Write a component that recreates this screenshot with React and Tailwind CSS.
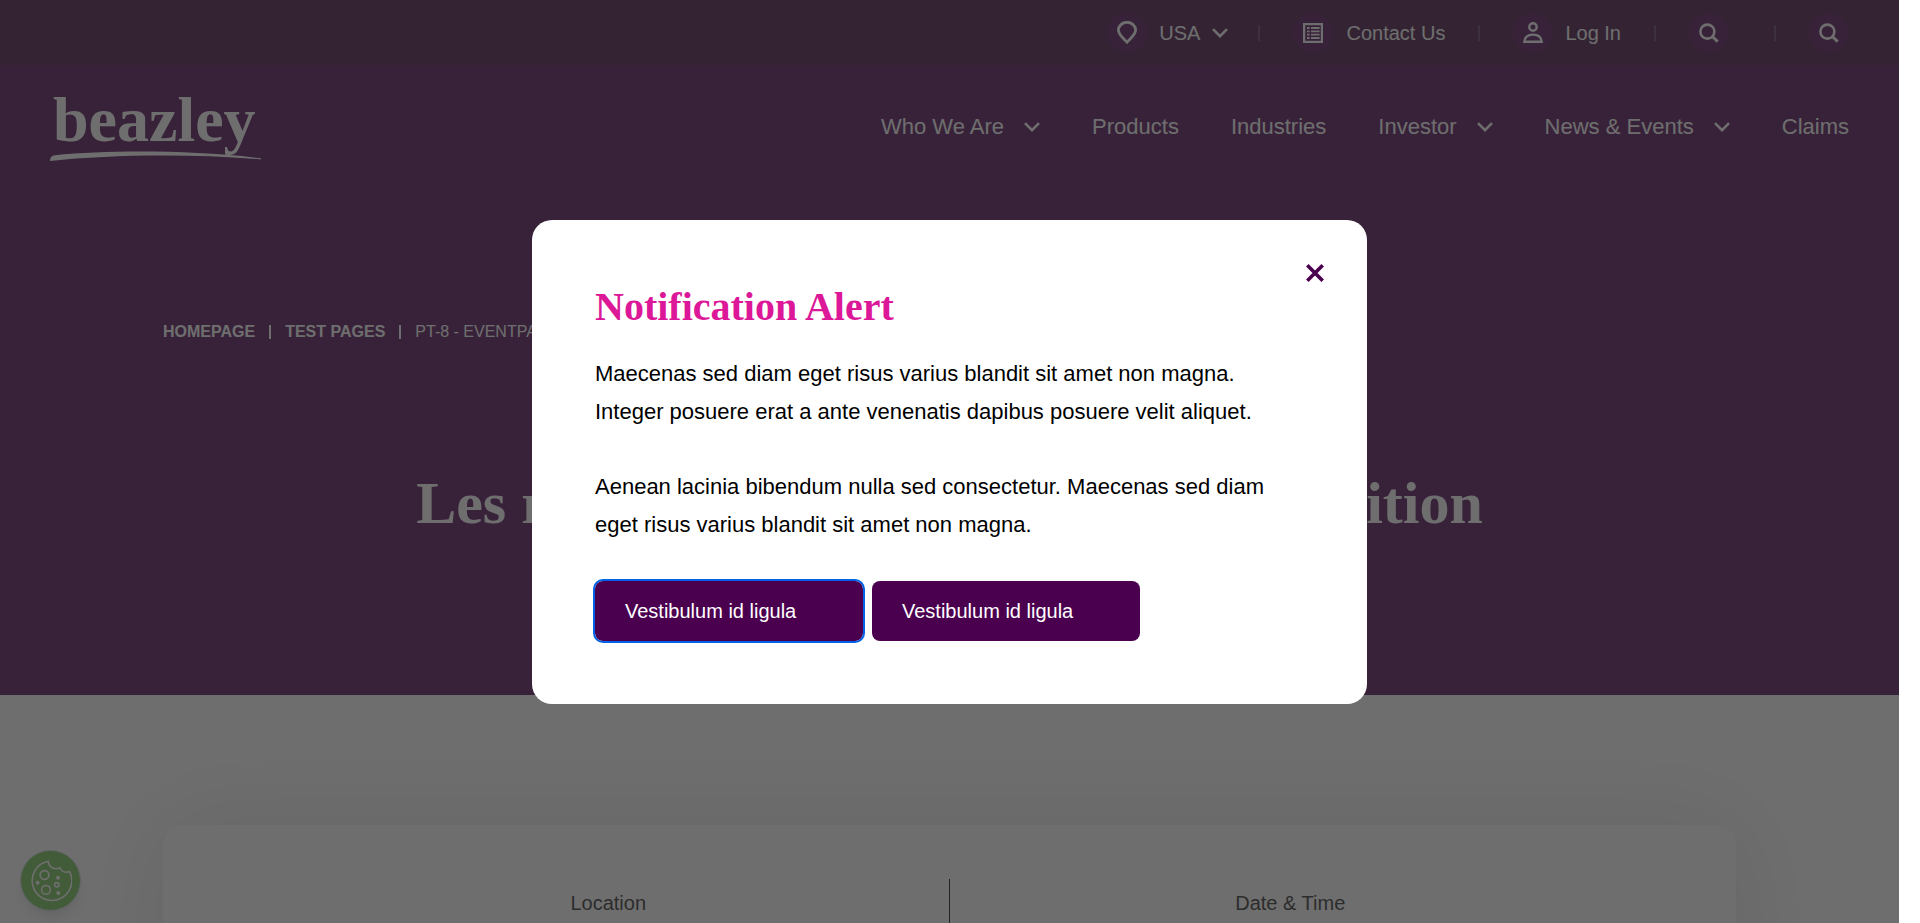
const Chevron = () => (
  <svg viewBox="0 0 16 10" className="h-[10px] w-4" fill="none" stroke="currentColor" strokeWidth="2.6" aria-hidden="true">
    <path d="M1 1.2 8 8.2 15 1.2" />
  </svg>
);

const Pin = () => (
  <svg viewBox="0 0 20 23" className="h-[23px] w-5" fill="none" stroke="currentColor" strokeWidth="2.8" aria-hidden="true">
    <path d="M10 21.2C7.6 18.4 1.4 13.6 1.4 9.2A8.6 7.9 0 0 1 18.6 9.2C18.6 13.6 12.4 18.4 10 21.2Z" />
  </svg>
);

const List = () => (
  <svg viewBox="0 0 20 20" className="size-5" fill="none" stroke="currentColor" aria-hidden="true">
    <rect x="1.1" y="1.1" width="17.8" height="17.8" strokeWidth="2.2" />
    <path d="M4 5h2.6M8 5h8.6M4 8.3h2.6M8 8.3h8.6M4 11.6h2.6M8 11.6h8.6M4 15h2.6M8 15h8.6" strokeWidth="1.8" />
  </svg>
);

const Person = () => (
  <svg viewBox="0 0 20 21" className="h-[21px] w-5" fill="none" stroke="currentColor" strokeWidth="2.4" aria-hidden="true">
    <circle cx="10" cy="5" r="3.7" />
    <path d="M1.3 19.8C1.8 15 5.4 12.6 10 12.6S18.2 15 18.7 19.8Z" />
  </svg>
);

const Search = () => (
  <svg viewBox="0 0 20 20" className="size-5" fill="none" stroke="currentColor" strokeWidth="2.6" aria-hidden="true">
    <circle cx="8.4" cy="8.6" r="7" />
    <path d="m13.4 13.6 5.4 5" strokeWidth="2.8" />
  </svg>
);

const Disc = ({ children }) => (
  <span className="flex size-10 items-center justify-center rounded-full bg-[#4b004f]">{children}</span>
);

const Bar = () => <span className="h-4 w-0.5 bg-[#5d3560]" aria-hidden="true" />;

const Cookie = () => (
  <svg viewBox="0 0 42 42" className="size-[42px]" fill="none" stroke="currentColor" strokeWidth="1.6" aria-hidden="true">
    <path d="M18.2 1.2A19.8 19.8 0 1 0 39.6 11.600C36 12.8 31.500 12.2 30 7.8 25.500 9.800 19 8.500 18.2 1.2Z" />
    <circle cx="14.5" cy="15" r="4.4" />
    <circle cx="16" cy="29.8" r="4.4" />
    <circle cx="26.800" cy="24.800" r="2.2" />
    <g fill="currentColor" stroke="none">
      <circle cx="28" cy="17.800" r="2" />
      <circle cx="7.600" cy="22.800" r="2" />
      <circle cx="28.300" cy="33" r="2" />
    </g>
  </svg>
);

const navItems = [
  { label: "Who We Are", menu: true },
  { label: "Products" },
  { label: "Industries" },
  { label: "Investor", menu: true },
  { label: "News & Events", menu: true },
  { label: "Claims" },
];

function TopBar() {
  return (
    <div className="flex h-[65px] items-center justify-end bg-[#3a053a] pr-[50px] text-xl">
      <button className="flex items-center">
        <Disc><Pin /></Disc>
        <span className="mx-3">USA</span>
        <Chevron />
      </button>
      <span className="ml-[30px] mr-[33px] flex"><Bar /></span>
      <a href="#contact" className="flex items-center gap-[13px]">
        <Disc><List /></Disc>Contact Us
      </a>
      <span className="mx-[33px] flex"><Bar /></span>
      <a href="#login" className="flex items-center gap-3">
        <Disc><Person /></Disc>Log In
      </a>
      <span className="mx-[33px] flex"><Bar /></span>
      <button aria-label="Search"><Disc><Search /></Disc></button>
      <span className="ml-[45px] mr-[33px] flex"><Bar /></span>
      <button aria-label="Search site"><Disc><Search /></Disc></button>
    </div>
  );
}

function Logo() {
  return (
    <a href="#home" className="block w-[212px]">
      <span className="block pl-[3px] font-['Liberation_Serif',serif] text-[64px] leading-[56px] font-bold">beazley</span>
      <svg viewBox="0 0 212 10" className="mt-[3px] h-[10px] w-full" fill="currentColor" aria-hidden="true">
        <path d="M0 10C0 6.500 1.500 4.500 5 4.200C60 -1 140 -1 211 7.200V8.400C140 2.600 60 3.600 0 10Z" />
      </svg>
    </a>
  );
}

function Dialog() {
  return (
    <div role="dialog" aria-modal="true" aria-labelledby="dialog-title" className="relative w-[835px] rounded-[20px] bg-white px-[63px] pt-[63px] pb-[63px] text-black">
      <button aria-label="Close" className="absolute top-[39px] right-[38px] flex size-7 items-center justify-center text-[#4b004f]">
        <svg viewBox="0 0 18 18" className="size-[18px]" stroke="currentColor" strokeWidth="3.6" aria-hidden="true">
          <path d="m1.300 1.300 15.400 15.400M16.700 1.300 1.300 16.700" />
        </svg>
      </button>
      <h2 id="dialog-title" className="font-['Liberation_Serif',serif] text-[40px] leading-[48px] font-bold text-[#dc1899]">Notification Alert</h2>
      <p className="mt-6 text-[22px] leading-[38px]">Maecenas sed diam eget risus varius blandit sit amet non magna. Integer posuere erat a ante venenatis dapibus posuere velit aliquet.</p>
      <p className="mt-[37px] text-[22px] leading-[38px]">Aenean lacinia bibendum nulla sed consectetur. Maecenas sed diam eget risus varius blandit sit amet non magna.</p>
      <div className="mt-[37px] flex gap-[9px] text-xl text-white">
        <button className="h-[60px] w-[268px] rounded-lg bg-[#4b004f] px-[30px] text-left outline-2 outline-[#0062e6]">Vestibulum id ligula</button>
        <button className="h-[60px] w-[268px] rounded-lg bg-[#4b004f] px-[30px] text-left">Vestibulum id ligula</button>
      </div>
    </div>
  );
}

export default function App() {
  return (
    <div className="h-screen overflow-hidden bg-white pr-[21px] font-['Liberation_Sans',Arial,sans-serif]">
      <div className="relative h-full overflow-hidden">
        <header className="bg-[#4b004f] text-white">
          <TopBar />
          <div className="flex items-start justify-between px-[50px]">
            <div className="pt-[27px]"><Logo /></div>
            <nav className="flex items-center gap-[52px] pt-[45px] text-[22px] leading-[34px]">
              {navItems.map((item) => (
                <a key={item.label} href="#nav" className="flex items-center gap-5">
                  {item.label}
                  {item.menu && <Chevron />}
                </a>
              ))}
            </nav>
          </div>
          <div className="mt-[159px] px-[163px]">
            <nav aria-label="Breadcrumb" className="flex items-center gap-[14px] text-base leading-6">
              <a href="#home" className="font-bold">HOMEPAGE</a>
              <span className="h-[14px] w-0.5 bg-white" />
              <a href="#test" className="font-bold">TEST PAGES</a>
              <span className="h-[14px] w-0.5 bg-white" />
              <span>PT-8 - EVENTPAGE</span>
            </nav>
            <h1 className="mt-[124px] pb-[157px] text-center font-['Liberation_Serif',serif] text-[60px] leading-[70px] font-bold">Les risques climatiques liés à la transition</h1>
          </div>
        </header>
        <main className="bg-white px-[163px] pt-[130px]">
          <section className="grid h-[300px] grid-cols-2 rounded-[20px] px-[105px] pt-[54px] text-center text-xl text-[#222] shadow-[0_0_100px_rgba(0,0,0,0.12)]">
            <h2 className="border-r border-black pt-[10px]">Location</h2>
            <h2 className="pt-[10px]">Date &amp; Time</h2>
          </section>
        </main>
        <button aria-label="Cookie settings" className="absolute bottom-3 left-5 flex size-[61px] items-center justify-center rounded-full border border-[#d5dde5] bg-[#6cc04a] text-white shadow-lg">
          <Cookie />
        </button>
        <div className="absolute inset-0 flex items-center justify-center bg-[#303030]/70">
          <Dialog />
        </div>
      </div>
    </div>
  );
}
